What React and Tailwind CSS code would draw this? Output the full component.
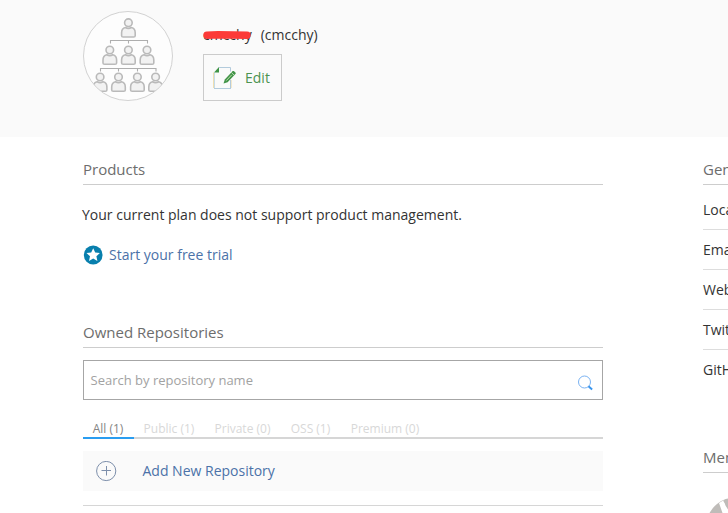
import React from "react";

function Person({ x, y }) {
  return (
    <g transform={`translate(${x} ${y})`} fill="#f2f2f2" stroke="#bababa" strokeWidth="1.6">
      <circle cx="0" cy="4.2" r="3.8" />
      <path d="M-6.8 17.2v-3c0-3.1 1.7-4.8 3.8-5.2 1.8 1.1 4.2 1.1 6 0 2.1.4 3.8 2.1 3.8 5.2v3c0 1-.6 1.3-1.6 1.3H-5.2c-1 0-1.6-.3-1.6-1.3z" />
    </g>
  );
}

function OrgAvatar() {
  return (
    <svg className="block size-[90px] shrink-0" viewBox="0 0 90 90">
      <defs>
        <clipPath id="avatar">
          <circle cx="45" cy="45" r="44.5" />
        </clipPath>
      </defs>
      <circle cx="45" cy="45" r="44.5" fill="#fdfdfd" />
      <g clipPath="url(#avatar)">
        <Person x={45.4} y={7.5} />
        <path d="M27.5 32.5v-3h37v3M45.5 29.5v3M17.5 60.5v-3h55.5v3M35.5 57.5v3M54.5 57.5v3" fill="none" stroke="#aeaeae" strokeWidth="1.1" />
        {[26.8, 45.4, 64].map((x) => (
          <Person key={x} x={x} y={34.8} />
        ))}
        {[17.1, 35.5, 54.4, 72.6].map((x) => (
          <Person key={x} x={x} y={61.8} />
        ))}
      </g>
      <circle cx="45" cy="45" r="44.5" fill="none" stroke="#d2d2d2" />
    </svg>
  );
}

function EditIcon() {
  return (
    <svg className="block h-6 w-6 shrink-0" viewBox="0 0 24 24" fill="none">
      <path d="M.5 6.5v15.500" stroke="#f0deb0" />
      <path d="M1.5 7v15" stroke="#c4dcea" />
      <path d="M6 1.5h11.5v4M17.5 14v8M1 22.500h17" stroke="#b3cbdc" />
      <path d="M18.5 14v8" stroke="#efe0b8" strokeWidth=".7" />
      <path d="M6 1v5.500H1z" fill="#3f9447" />
      <path d="M10.500 17.500l1.300-4 7.900-8.400c.8-.8 3.700 1.700 2.900 2.700l-8 8.500z" fill="#429448" />
      <path d="M13.300 14.600l5.500-5.800" stroke="#b9dca8" />
      <path d="M18.400 6.500l2.700 2.600" stroke="#e4f2df" strokeWidth=".7" />
    </svg>
  );
}

function SectionTitle({ children }) {
  return (
    <h2 className="h-[30px] whitespace-nowrap border-b border-[#cdcdcd] text-[15px] leading-[29px] text-[#6d6d6d]">
      {children}
    </h2>
  );
}

const tabs = [
  ["All (1)", "w-[51px] border-[#2a9df0] text-[#858585]"],
  ["Public (1)", "w-[71px] border-transparent text-[#d8d8d8]"],
  ["Private (0)", "w-[76px] border-transparent text-[#d8d8d8]"],
  ["OSS (1)", "w-[60px] border-transparent text-[#d8d8d8]"],
  ["Premium (0)", "w-[89px] border-transparent text-[#d8d8d8]"],
];

const details = ["Location", "Email", "Website", "Twitter", "GitHub"];

export default function App() {
  return (
    <div className="h-[513px] w-[728px] overflow-hidden bg-white font-['Open_Sans','Noto_Sans',sans-serif] text-sm text-[#333]">
      <header className="flex h-[137px] bg-[#fafafa] pl-[83px] pt-[11px]">
        <OrgAvatar />
        <div className="ml-[30px] pt-3.5">
          <div className="flex h-5 gap-[9px] leading-5">
            <span className="relative">
              cmcchy
              <svg className="absolute left-0 top-[5px] h-[10px] w-[49px]" viewBox="0 0 49 10">
                <path d="M4 5.200L15 4.800 44 5.200" fill="none" stroke="#fc3a38" strokeWidth="7.4" strokeLinecap="round" />
              </svg>
            </span>
            <span>(cmcchy)</span>
          </div>
          <button className="mt-[9px] flex h-[47px] w-[79px] items-center gap-2 border border-[#cbcbcb] pl-[9px] text-[#4c9350]">
            <EditIcon />
            <span>Edit</span>
          </button>
        </div>
      </header>
      <div className="flex gap-[100px] pl-[83px] pt-[18px]">
        <main className="w-[520px] shrink-0">
          <SectionTitle>Products</SectionTitle>
          <p className="-ml-px mt-5 h-5 leading-5">Your current plan does not support product management.</p>
          <a className="mt-5 flex h-5 items-center gap-[6px] text-[#4b72a8]">
            <svg className="block size-5" viewBox="0 0 20 20">
              <circle cx="10.2" cy="10" r="9.4" fill="#087fad" />
              <path d="M10.2 3.2l2 4.4 4.7.5-3.5 3.2 1 4.7-4.2-2.4L6 16l1-4.7-3.5-3.2 4.7-.5z" fill="#fff" />
            </svg>
            <span>Start your free trial</span>
          </a>
          <div className="h-[53px]" />
          <SectionTitle>Owned Repositories</SectionTitle>
          <div className="mt-3 flex h-10 items-center justify-between border border-[#a6a6a6] pl-[6.5px] pr-[9px] text-[13px] text-[#a2a2a2]">
            <span>Search by repository name</span>
            <svg className="mt-[5px] block size-4" viewBox="0 0 16 16" fill="none">
              <circle cx="7.500" cy="7" r="6" stroke="#79b2f2" strokeWidth="1" />
              <path d="M11.500 11.200l3.600 3.200" stroke="#3995ed" strokeWidth="2" />
            </svg>
          </div>
          <div className="mt-[17px] flex h-[22px] bg-[linear-gradient(to_top,#d6d6d6_2px,transparent_2px)] text-xs leading-[23px]">
            {tabs.map(([label, style]) => (
              <div key={label} className={`h-[22px] shrink-0 whitespace-nowrap border-b-2 pr-px text-center ${style}`}>
                {label}
              </div>
            ))}
          </div>
          <div className="mt-3 flex h-10 items-center gap-[26px] bg-[#fafafa] pl-[13px] text-[#4b72a8]">
            <svg className="block size-[21px]" viewBox="0 0 21 21" fill="none" stroke="#7d8fab">
              <circle cx="10.2" cy="10" r="9.6" />
              <path d="M5.5 9.5h9.5M10.5 5v9.5" />
            </svg>
            <span className="-ml-[0.5px]">Add New Repository</span>
          </div>
          <div className="mt-3.5 border-t border-[#d6d6d6]" />
        </main>
        <aside className="w-[200px] shrink-0">
          <SectionTitle>General</SectionTitle>
          <ul className="pt-[5px]">
            {details.map((label) => (
              <li key={label} className="h-10 border-b border-[#dddddd] leading-[39px] last:border-0">
                {label}
              </li>
            ))}
          </ul>
          <div className="h-[53px]" />
          <SectionTitle>Members</SectionTitle>
          <svg className="mt-[25px] block size-[50px]" viewBox="0 0 50 50">
            <path d="M25 0.500C18 2 11 7 6.500 15H50V0z" fill="#bfbcb9" />
            <path d="M16 5l5-3 1.500 5.500 2.500 4V15h-5.500z" fill="#fff" />
            <path d="M20 2.500L25 1v9.500z" fill="#bfbcb9" />
          </svg>
        </aside>
      </div>
    </div>
  );
}
